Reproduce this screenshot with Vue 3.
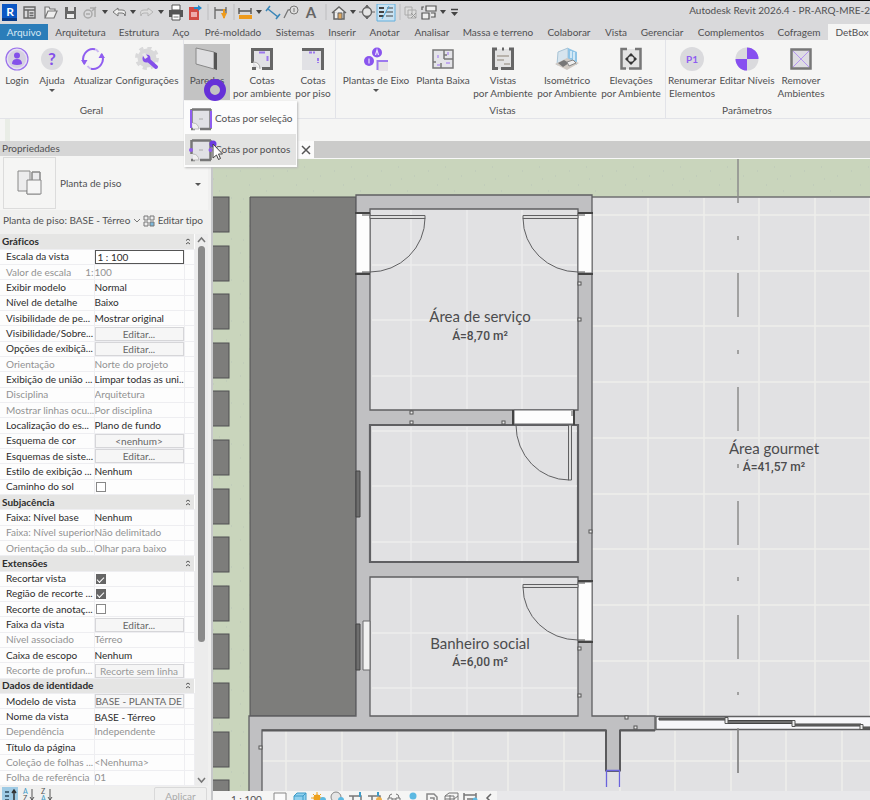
<script setup>
import { ref } from 'vue'

const caret = '<path d="M2 6h6L5 10z" fill="#444"/>'
const sep = '<path d="M4 0v16" stroke="#bdbdbf"/>'

const quickItems = [
  { name: 'Revit', w: 20, d: '<path d="M2 0h15v17H2z" fill="#0b57c4"/><path d="M2 14h15v3H2z" fill="#083a86"/><text x="10" y="12" font-size="12" font-weight="700" text-anchor="middle" fill="#fff">R</text>' },
  { name: 'Início', w: 20, d: '<g fill="none" stroke="#666" stroke-width="1.400"><path d="M4 3h11v11H4zM4 6h11M8 6v8"/><path d="M9.500 9h4M9.500 11.500h4"/></g>' },
  { name: 'Abrir', w: 20, d: '<path d="M5 14V3h4l1 2h5v2M5 14l3-7h9l-3 7z" fill="#eee" stroke="#777" stroke-width="1.200"/>' },
  { name: 'Salvar', w: 20, d: '<path d="M5 3h11v12H5z" fill="#666"/><path d="M8 3h6v4H8z" fill="#ddd"/><path d="M7 10h7v4H7z" fill="#eee"/>' },
  { name: 'Sincronizar', w: 20, d: '<g fill="none" stroke="#aaa" stroke-width="1.500"><circle cx="8" cy="10" r="4"/><path d="M10 4h5v9M12 7l4-4M6 10h4"/></g>' },
  { name: 'Opções de sincronização', w: 10, d: caret },
  { name: 'Desfazer', w: 18, d: '<path d="M8 4L3 8l5 4v-3h4q3 0 3 3 2-6-3-6H8z" fill="#eee" stroke="#777"/>' },
  { name: 'Lista de desfazer', w: 10, d: caret },
  { name: 'Refazer', w: 18, d: '<path d="M10 4l5 4-5 4v-3H6q-3 0-3 3-2-6 3-6h4z" fill="#ddd" stroke="#b5b5b5"/>' },
  { name: 'Lista de refazer', w: 10, d: caret },
  { name: 'Imprimir', w: 20, d: '<path d="M6 1h8v5H6z" fill="#fff" stroke="#555"/><path d="M3 6h14v7H3z" fill="#555"/><path d="M6 10h8v6H6z" fill="#fff" stroke="#555"/><path d="M7.500 13h5" stroke="#777"/>' },
  { name: 'Exportar PDF', w: 18, d: '<path d="M3 3h10v13H3z" fill="#d14a43"/><path d="M5 8h6v5H5z" fill="#eaa"/><path d="M8 3h4V1l4 3-4 3V5H8z" fill="#2487c9"/>' },
  { w: 8, d: sep },
  { name: 'Cota', w: 18, d: '<g fill="none" stroke="#666" stroke-width="1.300"><path d="M3 3v12M14 3v6M3 6h11"/></g><path d="M9 9h6l-3 6z" fill="#ee9b1d"/><path d="M12 5v9" stroke="#ee9b1d" stroke-width="2"/>' },
  { w: 6, d: sep },
  { name: 'Medir', w: 18, d: '<path d="M3 4v6M15 4v6M3 7h12" stroke="#555" stroke-width="1.400"/><path d="M3 11h13v4H3z" fill="#ee9b1d"/>' },
  { name: 'Opções de medida', w: 10, d: caret },
  { name: 'Cota alinhada', w: 18, d: '<path d="M4 5l10 8M2 7l4-5M12 15l4-5" stroke="#3a86b8" stroke-width="1.600"/>' },
  { name: 'Identificador', w: 18, d: '<path d="M2 14l4-8 5-1" fill="none" stroke="#777" stroke-width="1.300"/><circle cx="12" cy="6" r="4" fill="#ddd" stroke="#777"/><path d="M12 4v4" stroke="#777"/>' },
  { name: 'Texto', w: 22, d: '<text x="11" y="14" font-size="15" font-weight="700" text-anchor="middle" fill="#666">A</text>' },
  { w: 8, d: sep },
  { name: 'Vista 3D', w: 18, d: '<path d="M2 9l7-6 7 6M4 8v7h10V8" fill="#eee" stroke="#666" stroke-width="1.500"/><path d="M8 9h4v6H8z" fill="#dfa860" stroke="#666"/>' },
  { name: 'Opções de vista 3D', w: 10, d: caret },
  { name: 'Corte', w: 18, d: '<path d="M9 1l3 4H6zM9 15l3-4H6zM1 8h3M14 8h3" fill="#666" stroke="#666"/><circle cx="9" cy="8" r="4.500" fill="#e5e5e5" stroke="#666" stroke-width="1.400"/>' },
  { name: 'Linhas finas', w: 20, d: '<path d="M1 0h18v17H1z" fill="#c9e2f2" stroke="#62b0de"/><path d="M3 4h5M3 8h5M3 12h5" stroke="#444" stroke-width="2"/><path d="M11 4h6M10 8h7M10 12h7" stroke="#444"/><path d="M13 2L6 15" stroke="#4fa8db"/>' },
  { w: 6, d: sep },
  { name: 'Fechar inativas', w: 18, d: '<path d="M3 3h7v8H3zM6 6h8v8H6z" fill="#ddd" stroke="#aaa"/><path d="M9 9l5 5M14 9l-5 5" stroke="#999"/>' },
  { name: 'Alternar janelas', w: 18, d: '<g fill="#eee" stroke="#555" stroke-width="1.200"><path d="M6 2h10v5H6zM2 9h7v6H2zM11 9h4v4h-4"/><path d="M2 6V3h2"/></g>' },
  { name: 'Lista de janelas', w: 10, d: caret },
  { name: 'Personalizar', w: 14, d: '<path d="M3 5.500h7" stroke="#444" stroke-width="1.500"/><path d="M3 8h7l-3.500 4z" fill="#444"/>' },
]

const tabs = ['Arquivo', 'Arquitetura', 'Estrutura', 'Aço', 'Pré-moldado', 'Sistemas', 'Inserir', 'Anotar', 'Analisar', 'Massa e terreno', 'Colaborar', 'Vista', 'Gerenciar', 'Complementos', 'Cofragem', 'DetBox']
const activeTab = ref('DetBox')

const groups = [
  {
    title: 'Geral', cls: 'geral', tools: [
      { lines: ['Login'], d: '<circle cx="12" cy="12" r="11" fill="#e6e1f2" stroke="#9a70ec" stroke-width="1.200"/><circle cx="12" cy="12" r="9" fill="#d5d1e0"/><circle cx="12" cy="8.500" r="3" fill="#8450ea"/><path d="M7 17q0-5 5-5t5 5q-5 2-10 0z" fill="#8450ea"/>' },
      { lines: ['Ajuda'], drop: true, d: '<circle cx="12" cy="12" r="11" fill="#dcdcdf"/><text x="12" y="18" font-size="17" font-weight="700" text-anchor="middle" fill="#8450ea">?</text>' },
      { lines: ['Atualizar'], d: '<g fill="none" stroke="#8f5df0" stroke-width="2"><path d="M3.500 17A10 10 0 0 1 14 2.200M20.500 7A10 10 0 0 1 10 21.800"/><path d="M6.500 19A10 10 0 0 0 10 21.800M17.500 5A10 10 0 0 0 14 2.200" opacity=".4"/></g><path d="M0 13l3.500 5 3-5zM17.500 11l3-5 3.500 5z" fill="#8f5df0"/>' },
      { lines: ['Configurações'], d: '<circle cx="12" cy="11" r="6.500" fill="none" stroke="#d9d9da" stroke-width="6"/><circle cx="12" cy="11" r="10.500" fill="none" stroke="#d9d9da" stroke-width="3" stroke-dasharray="4.200 4.050"/><path d="M12 12l9 8" stroke="#8450ea" stroke-width="4" stroke-linecap="round"/><circle cx="11.500" cy="11.500" r="4" fill="#8450ea"/><path d="M7 7l3-1 3 4-3 2z" fill="#e9e9e9"/>' },
    ],
  },
  {
    title: '', cls: 'cotas', tools: [
      { lines: ['Paredes'], open: true, d: '<path d="M1 1l18 4v17L1 17z" fill="#dedee0" stroke="#888"/><path d="M19 5l3 1v17l-3-1z" fill="#555"/>' },
      { lines: ['Cotas', 'por ambiente'], d: '<path d="M3 3h18v18H3z" fill="#e1e1e5"/><path d="M2.500 16V2.500h19v19H12M2 21.500h4" fill="none" stroke="#666" stroke-width="3"/><path d="M3 15q7 0 7 7" fill="#f5f5f4" stroke="#aaa"/><path d="M9 5.500h6M17.500 9v5" stroke="#9d78ee" stroke-width="2"/>' },
      { lines: ['Cotas', 'por piso'], d: '<path d="M1 3h20v20H1z" fill="#e1e1e5"/><path d="M1 2.500h20.500V23" fill="none" stroke="#666" stroke-width="3"/><path d="M8 5.500h6M17 11v5" stroke="#9d78ee" stroke-width="2" stroke-dasharray="3 1"/>' },
    ],
  },
  {
    title: 'Vistas', cls: 'vistas', tools: [
      { lines: ['Plantas de Eixo'], drop: true, d: '<circle cx="5" cy="14" r="5" fill="#8a55ee"/><circle cx="13" cy="5.500" r="5" fill="#8a55ee"/><path d="M5 11.500v5M11.500 8l1.500-5 1.500 5" fill="none" stroke="#e9dffc" stroke-width="1.200"/><path d="M14 15h10v9H14z" fill="#e8e3e6"/><path d="M13.500 23v-9H24" fill="none" stroke="#9d78ee" stroke-width="2"/>' },
      { lines: ['Planta Baixa'], d: '<path d="M2 3h20v18H2z" fill="#e4e4e8" stroke="#777" stroke-width="1.500"/><path d="M13 3v9M13 8h3M13 12h9M10 21v-5M2 15h3" stroke="#777" stroke-width="1.500" fill="none"/><path d="M7 8v3M15 16h4M17 5v3M6 18h3" stroke="#b496f0" stroke-width="1.500"/>' },
      { lines: ['Vistas', 'por Ambiente'], d: '<path d="M3 2h18v20H3z" fill="#e3e3e3"/><path d="M6 2H2.500v19.500H7M11 2h2M18 2h3.500v19.500H10" fill="none" stroke="#666" stroke-width="3"/><path d="M6 9h12M6 13h7M13 17h6" stroke="#aaa49a" stroke-width="1.500"/>' },
      { lines: ['Isométrico', 'por Ambiente'], d: '<path d="M3 5l10-4v13L2 18z" fill="#d7e5ee" stroke="#a9c4d6"/><path d="M13 1l9 4v13l-9-4z" fill="#8fc4e6"/><path d="M16 4v7M19 5v8" stroke="#e8f4fb" stroke-width="1.500"/><path d="M0 17l12-6 12 5-12 7z" fill="#cfc9c2"/><path d="M3 16l6-3 5 3-6 4z" fill="#777"/><path d="M12 15l6-2 3 3-7 3z" fill="#efefef" stroke="#888"/>' },
      { lines: ['Elevações', 'por Ambiente'], d: '<path d="M3 2h18v20H3z" fill="#e3e3e3"/><path d="M8 2H2.500v19.500H7M16 2h5.500v19.500H10" fill="none" stroke="#777" stroke-width="2.500"/><circle cx="12" cy="12" r="3.500" fill="none" stroke="#333" stroke-width="1.500"/><path d="M12 6l2 2h-4zM12 18l2-2h-4zM6 12l2-2v4zM18 12l-2-2v4z" fill="#333"/>' },
    ],
  },
  {
    title: 'Parâmetros', cls: 'parametros', tools: [
      { lines: ['Renumerar', 'Elementos'], d: '<circle cx="12" cy="12" r="12" fill="#dadadd"/><text x="12" y="15.500" font-size="10" font-weight="700" text-anchor="middle" fill="#8f5df0">P1</text>' },
      { lines: ['Editar Níveis'], d: '<circle cx="12" cy="12" r="11.500" fill="#dadadd"/><path d="M12 12V.5A11.500 11.500 0 0 1 23.500 12zM12 12v11.500A11.500 11.500 0 0 1 .5 12z" fill="#874ff0"/>' },
      { lines: ['Remover', 'Ambientes'], d: '<path d="M2.500 2.500h19v19h-19z" fill="#dedde3" stroke="#777" stroke-width="2.500"/><path d="M4 4l16 16M20 4L4 20" stroke="#b595f2"/>' },
    ],
  },
]

const room = '<path d="M2 2h20v20H2z" fill="#e1e1e5"/><path d="M3 2.500h19M2.500 2v14M21.500 2v20M2 22h4M11 22h11" stroke="#777" stroke-width="2.500"/><path d="M4 16q5 0 6 6H4" fill="#f0f0f0" stroke="#bbb"/><path d="M10 12h4" stroke="#aaa"/>'
const menuItems = [
  { label: 'Cotas por seleção', d: room + '<path d="M2 3v18M22 4v17" stroke="#8f5df0" stroke-width="2"/>' },
  { label: 'Cotas por pontos', hot: true, d: room + '<circle cx="2" cy="12" r="2" fill="#8f5df0"/><circle cx="21.500" cy="12" r="2" fill="#8f5df0"/>' },
]

const sections = [
  {
    title: 'Gráficos', rows: [
      { k: 'Escala da vista', t: 'select', v: '1 : 100' },
      { k: 'Valor de escala', extra: '1:', v: '100', off: true },
      { k: 'Exibir modelo', v: 'Normal' },
      { k: 'Nível de detalhe', v: 'Baixo' },
      { k: 'Visibilidade de pe...', v: 'Mostrar original' },
      { k: 'Visibilidade/Sobre...', t: 'button', v: 'Editar...' },
      { k: 'Opções de exibiçã...', t: 'button', v: 'Editar...' },
      { k: 'Orientação', v: 'Norte do projeto', off: true },
      { k: 'Exibição de união ...', v: 'Limpar todas as uni...' },
      { k: 'Disciplina', v: 'Arquitetura', off: true },
      { k: 'Mostrar linhas ocu...', v: 'Por disciplina', off: true },
      { k: 'Localização do es...', v: 'Plano de fundo' },
      { k: 'Esquema de cor', t: 'button', v: '<nenhum>' },
      { k: 'Esquemas de siste...', t: 'button', v: 'Editar...' },
      { k: 'Estilo de exibição ...', v: 'Nenhum' },
      { k: 'Caminho do sol', t: 'check', v: false },
    ],
  },
  {
    title: 'Subjacência', rows: [
      { k: 'Faixa: Nível base', v: 'Nenhum' },
      { k: 'Faixa: Nível superior', v: 'Não delimitado', off: true },
      { k: 'Orientação da sub...', v: 'Olhar para baixo', off: true },
    ],
  },
  {
    title: 'Extensões', rows: [
      { k: 'Recortar vista', t: 'check', v: true },
      { k: 'Região de recorte ...', t: 'check', v: true },
      { k: 'Recorte de anotaç...', t: 'check', v: false },
      { k: 'Faixa da vista', t: 'button', v: 'Editar...' },
      { k: 'Nível associado', v: 'Térreo', off: true },
      { k: 'Caixa de escopo', v: 'Nenhum' },
      { k: 'Recorte de profun...', t: 'button', v: 'Recorte sem linha', off: true },
    ],
  },
  {
    title: 'Dados de identidade', rows: [
      { k: 'Modelo de vista', t: 'button', v: 'BASE - PLANTA DE PI', start: true },
      { k: 'Nome da vista', t: 'text', v: 'BASE - Térreo' },
      { k: 'Dependência', v: 'Independente', off: true },
      { k: 'Título da página', t: 'text', v: '' },
      { k: 'Coleção de folhas ...', v: '<Nenhuma>', off: true },
      { k: 'Folha de referência', v: '01', off: true },
    ],
  },
]
const idFor = (s, r) => `prop-${s}-${r}`

const series = (start, step, count) => Array.from({ length: count }, (_, i) => Math.round(start + i * step))
const slabs = series(197, 48.6, 13)
const roomCols = series(411, 55.7, 3)
const roomRows = [265, 320, 376, 431, 486, 542, 633, 688]
const gourmetCols = series(648, 55.6, 5)
const gourmetRows = series(215, 55.7, 9)
const lowerCols = series(286, 55.6, 11)
const axisDashes = [[159, 203], [236, 240], [273, 317], [350, 354], [387, 431], [464, 468], [501, 545], [577, 581], [615, 659], [692, 695], [728, 773]]
const sockets = [[578, 282], [578, 318], [410, 411], [410, 421], [502, 421], [589, 530], [578, 647], [578, 694], [625, 716], [634, 726], [259, 746]]

const viewTools = [
  { name: 'Estilo visual', d: '<path d="M2 2h12v12H2z" fill="#fbfbfb" stroke="#888"/>' },
  { name: 'Modelo', d: '<path d="M3 5l3-3h9v10l-3 3H3z" fill="#8fd0ee" stroke="#3c9bc8"/><path d="M3 5h9v9M12 5l3-3" fill="none" stroke="#3c9bc8"/>' },
  { name: 'Caminho do sol', d: '<circle cx="7" cy="7" r="3.500" fill="#eda01c"/><path d="M7 1v12M1 7h12M3 3l8 8M11 3l-8 8" stroke="#eda01c"/><circle cx="13" cy="9" r="3" fill="#5cb9e2"/>' },
  { name: 'Sombras', d: '<circle cx="7" cy="6" r="5" fill="#e5e5e5" stroke="#888"/><circle cx="12" cy="9" r="3" fill="#5cb9e2"/>' },
  { name: 'Recortar vista', d: '<path d="M1 5h12v8M5 5v8" fill="none" stroke="#777" stroke-width="1.500"/><path d="M12 1v5" stroke="#3c9bc8" stroke-width="2"/>' },
  { name: 'Região de recorte', d: '<path d="M1 5h12v8M5 5v8" fill="none" stroke="#777" stroke-width="1.500"/><path d="M11 1v4" stroke="#3c9bc8" stroke-width="2"/><circle cx="12" cy="9" r="3" fill="#edb04c"/>' },
  { name: 'Ocultar', d: '<path d="M3 7q0-4 3-4M13 7q0-4-3-4M2 7h4v4H2zM10 7h4v4h-4zM6 8h4" fill="none" stroke="#777"/>' },
  { name: 'Revelar', d: '<circle cx="8" cy="5" r="3.500" fill="#5cb9e2"/><path d="M6 10h4" stroke="#777" stroke-width="2"/>' },
  { name: 'Propriedades temporárias', d: '<path d="M3 3h7l3 3v8H3zM6 7h4v5" fill="none" stroke="#888" stroke-width="1.500"/>' },
  { name: 'Modelo analítico', d: '<path d="M2 5l4-3h9v9l-4 3H2zM2 8h9l4-3M7 4v10M2 5h9v9" fill="none" stroke="#777"/>' },
  { name: 'Restrições', d: '<path d="M2 2v12M14 2v6M2 4h12M5 8h6v5" fill="none" stroke="#777" stroke-width="1.500"/><circle cx="13" cy="9" r="2.500" fill="#5cb9e2"/>' },
  { name: 'Recolher', d: '<path d="M10 3L6 7l4 4" fill="none" stroke="#666" stroke-width="1.500"/>' },
]
</script>

<template>
  <div class="app">
    <header class="titlebar">
      <nav class="quick" aria-label="Acesso rápido">
        <template v-for="(q, i) in quickItems" :key="i">
          <button v-if="q.name" type="button" class="bare" :aria-label="q.name">
            <svg :width="q.w" height="18" v-html="q.d" />
          </button>
          <svg v-else :width="q.w" height="18" v-html="q.d" />
        </template>
      </nav>
      <span class="doc-title">Autodesk Revit 2026.4 - PR-ARQ-MRE-2</span>
    </header>

    <nav class="tabs">
      <button v-for="t in tabs" :key="t" type="button" class="tab"
        :class="{ file: t === 'Arquivo', active: t === activeTab }" @click="activeTab = t">{{ t }}</button>
    </nav>

    <section class="ribbon">
      <div v-for="g in groups" :key="g.cls" class="group" :class="g.cls">
        <div class="tools">
          <div v-for="tool in g.tools" :key="tool.lines.join()" class="tool-slot">
            <button type="button" class="tool" :class="{ pressed: tool.open }">
              <svg width="24" height="24" viewBox="0 0 24 24" v-html="tool.d" />
              <span v-for="l in tool.lines" :key="l" class="line">{{ l }}</span>
              <span v-if="tool.drop" class="drop" />
            </button>
            <template v-if="tool.open">
              <div class="menu">
                <button v-for="m in menuItems" :key="m.label" type="button" class="menu-item" :class="{ hot: m.hot }">
                  <svg width="24" height="24" viewBox="0 0 24 24" v-html="m.d" />
                  <span>{{ m.label }}</span>
                </button>
              </div>
              <span class="click-ring" />
              <svg class="pointer" width="16" height="24" viewBox="0 0 16 24">
                <circle cx="4" cy="4" r="3.500" fill="#6b3be0" />
                <path d="M4 4v14l3.500-3 2 4.500 2-1-2-4.500h4z" fill="#fff" stroke="#444" />
              </svg>
            </template>
          </div>
        </div>
        <div class="group-title">{{ g.title }}</div>
      </div>
    </section>
    <div class="options" />

    <main class="work">
      <aside class="panel">
        <h2 class="panel-title">Propriedades</h2>
        <div class="type">
          <span class="thumb">
            <svg width="26" height="26" viewBox="0 0 26 26">
              <g fill="#ececed" stroke="#888"><path d="M1 1h12v20H1zM15 2h8v22H10v-4h5z" /><path d="M10 10h14v14H10z" fill="#f5f5f5" /><path d="M15 10V2h8v8" fill="none" /></g>
            </svg>
          </span>
          <span class="type-name">Planta de piso</span>
          <span class="drop" />
        </div>
        <div class="instance">
          <button type="button" class="bare picker">Planta de piso: BASE - Térreo
            <svg width="8" height="8"><path d="M1 2l3 3 3-3" fill="none" stroke="#777" /></svg>
          </button>
          <button type="button" class="bare edit-type">
            <svg width="12" height="12"><path d="M1 1h4v4H1zM1 7h4v4H1zM7 1h4v4H7z" fill="#eee" stroke="#777" /><path d="M7 7h4v4H7z" fill="#7db9dc" stroke="#777" /></svg>
            Editar tipo
          </button>
        </div>
        <div class="grid-area">
          <table class="props">
            <colgroup><col class="c-name"><col class="c-val"><col class="c-end"></colgroup>
            <tbody v-for="(s, si) in sections" :key="s.title">
              <tr class="section">
                <th colspan="2" scope="rowgroup">{{ s.title }}</th>
                <td><svg width="7" height="9"><path d="M2 3.500l2-1.500 2 1.500M2 7l2-1.500L6 7" fill="none" stroke="#555" /></svg></td>
              </tr>
              <tr v-for="(r, ri) in s.rows" :key="r.k" :class="{ off: r.off }">
                <th scope="row">
                  <label v-if="r.t" :for="idFor(si, ri)">{{ r.k }}</label>
                  <span v-else class="key"><span>{{ r.k }}</span><span v-if="r.extra">{{ r.extra }}</span></span>
                </th>
                <td class="val">
                  <select v-if="r.t === 'select'" :id="idFor(si, ri)" class="scale"><option>{{ r.v }}</option></select>
                  <button v-else-if="r.t === 'button'" :id="idFor(si, ri)" type="button" class="cell-btn" :class="{ start: r.start }">{{ r.v }}</button>
                  <input v-else-if="r.t === 'check'" :id="idFor(si, ri)" type="checkbox" :checked="r.v">
                  <input v-else-if="r.t === 'text'" :id="idFor(si, ri)" type="text" class="cell-text" :value="r.v">
                  <template v-else>{{ r.v }}</template>
                </td>
                <td />
              </tr>
            </tbody>
          </table>
          <div class="scroll">
            <svg width="9" height="12"><path d="M1 8l3.500-4L8 8" fill="none" stroke="#777" stroke-width="1.500" /></svg>
            <div class="track"><div class="thumb-bar" /></div>
            <svg width="9" height="12"><path d="M1 4l3.500 4L8 4" fill="none" stroke="#777" stroke-width="1.500" /></svg>
          </div>
        </div>
        <footer class="panel-foot">
          <button type="button" class="bare sort on" aria-label="Agrupar">
            <svg width="16" height="16"><path d="M3 5h4M3 9h4M3 13h4" stroke="#47677d" stroke-width="2" /><path d="M12 3v12M10 6l2-3 2 3" stroke="#333" stroke-width="1.500" fill="none" /></svg>
          </button>
          <button type="button" class="bare sort" aria-label="Ordem crescente">
            <svg width="16" height="16"><text x="3" y="7" font-size="7" fill="#3c9bc8">A</text><text x="3" y="14" font-size="7" fill="#555">Z</text><path d="M12 2v11M10 10l2 3 2-3" stroke="#555" fill="none" /></svg>
          </button>
          <button type="button" class="bare sort" aria-label="Ordem decrescente">
            <svg width="16" height="16"><text x="3" y="7" font-size="7" fill="#555">Z</text><text x="3" y="14" font-size="7" fill="#3c9bc8">A</text><path d="M12 2v11M10 10l2 3 2-3" stroke="#555" fill="none" /></svg>
          </button>
          <button type="button" class="apply" disabled>Aplicar</button>
        </footer>
      </aside>

      <section class="view">
        <div class="view-tabs">
          <div class="view-tab">
            <button type="button" class="bare close" aria-label="Fechar vista">
              <svg width="10" height="10"><path d="M1 1l8 8M9 1L1 9" stroke="#555" stroke-width="1.500" /></svg>
            </button>
          </div>
        </div>
        <svg class="plan" viewBox="213 159 657 632" preserveAspectRatio="xMinYMin slice" role="img" aria-label="Planta baixa do térreo">
          <defs>
            <pattern id="grass" width="47" height="41" patternUnits="userSpaceOnUse">
              <path d="M0 0h47v41H0z" fill="#c9d5bc" />
              <path d="M5 7h1M22 3h1M38 12h1M14 21h1M31 27h1M8 35h1M43 34h1M25 15h1" stroke="#bac5b8" />
            </pattern>
          </defs>
          <path d="M213 159h657v632H213z" fill="url(#grass)" />
          <g fill="#7d7d7b" stroke="#505052">
            <rect v-for="y in slabs" :key="y" x="205" :y="y" width="24" height="35" />
            <path d="M250 197h106v519H250z" />
          </g>
          <path d="M592 197h290v520H592z" fill="#e1e1e3" />
          <path d="M262 730h620v70H262z" fill="#e1e1e3" />
          <g stroke="#eeeeeb" stroke-width="1.500">
            <path v-for="x in gourmetCols" :key="'gc' + x" :d="`M${x} 198V716`" />
            <path v-for="y in gourmetRows" :key="'gr' + y" :d="`M592 ${y}H880`" />
            <path v-for="x in lowerCols" :key="'lc' + x" :d="`M${x} 731V800`" />
            <path d="M262 761H880" />
          </g>
          <path d="M592 197H880" stroke="#6f6f72" stroke-width="1.500" />
          <g fill="none" stroke="#8b8b8b" stroke-width="1.500">
            <path v-for="d in axisDashes" :key="d[0]" :d="`M738 ${d[0]}V${d[1]}`" />
          </g>
          <path d="M356 195h236v521h63v14h-35v41h-14v-41H262v70h-13v-84h107z" fill="#c0c0c2" stroke="#5f5f62" stroke-width="1.300" />
          <g fill="#e1e1e3" stroke="#5f5f62" stroke-width="1.300">
            <path d="M370 209h208v201H370zM370 577h208v139H370z" />
            <path d="M370 425h208v137H370z" stroke-width="2.200" />
          </g>
          <path d="M262 730.500H606M620 730.500H655M606 730v41M620 730v41M606 771h14" stroke="#5a5a5c" stroke-width="2" />
          <g stroke="#ededed" stroke-width="1.400">
            <path v-for="x in roomCols" :key="x" :d="`M${x} 210V409M${x} 427V561M${x} 578V715`" />
            <path v-for="y in roomRows" :key="y" :d="`M372 ${y}H577`" />
          </g>
          <g fill="#fdfdfd" stroke="#6a6a6c">
            <path d="M356 213h14v60h-14zM578 213h14v60h-14zM514 410h60v14h-60zM578 582h14v59h-14z" />
            <path d="M363 621h7v49h-7z" fill="#f1f1f1" />
          </g>
          <path d="M355 213h15M355 274h15M578 213h15M578 274h15M578 581h15M578 642h15M513 410v15M574 410v15" stroke="#444" stroke-width="2" />
          <path d="M362 215h8M362 272h8M578 215h7M578 272h7M578 583h7M578 640h7M572 411v5" stroke="#555" />
          <g fill="#dedede" stroke="#606062">
            <path d="M370 215.500h55v3h-55zM523 215.500h55v3h-55zM568.500 425h3v55h-3zM523 584.500h55v3h-55z" />
            <path d="M425 218A55 54 0 0 1 370 272M523 218A55 54 0 0 0 578 272M516 425A53 55 0 0 0 569 480M523 587A55 53 0 0 0 578 640" fill="none" />
          </g>
          <g fill="#6e6e6e" stroke="#454545">
            <path d="M356 471h4v46h-4zM356 624h4v46h-4z" />
          </g>
          <g fill="#eee" stroke="#555">
            <rect v-for="s in sockets" :key="s.join()" :x="s[0]" :y="s[1]" width="3" height="3" />
          </g>
          <path d="M656 716.500h230v13H656z" fill="#f7f7fa" stroke="#606062" stroke-width="1.300" />
          <g fill="#6f6f6f" stroke="#454545">
            <path d="M659 718h68v2h-68zM727 720.500h67v3h-67zM794 724h67v2h-67zM861 727h20v2h-20z" />
          </g>
          <path d="M725 717.500h3v6h-3zM792 720.500h3v6h-3zM860 724.500h3v5h-3z" fill="#eee" stroke="#555" />
          <path d="M738 728v45" stroke="#8b8b8b" stroke-width="1.500" />
          <path d="M606.500 770v17M619.500 770v17M606 770.500h14" stroke="#6a64dc" stroke-width="1.300" />
          <g class="room-name">
            <text x="480" y="322">Área de serviço</text>
            <text x="480" y="649">Banheiro social</text>
            <text x="774" y="454">Área gourmet</text>
          </g>
          <g class="room-area">
            <text x="480" y="340">Á=8,70 m²</text>
            <text x="480" y="666">Á=6,00 m²</text>
            <text x="774" y="471">Á=41,57 m²</text>
          </g>
        </svg>
        <footer class="status">
          <div class="view-control">
            <button type="button" class="bare scale-label">1 : 100</button>
            <button v-for="v in viewTools" :key="v.name" type="button" class="bare" :aria-label="v.name">
              <svg width="16" height="16" v-html="v.d" />
            </button>
          </div>
        </footer>
      </section>
    </main>
  </div>
</template>

<style>
body {
  background: #f5f5f4;
}
</style>

<style scoped>
* {
  box-sizing: border-box;
}
.app {
  display: flex;
  flex-direction: column;
  height: 100vh;
  overflow: hidden;
  border-top: 1px solid #000;
  background: #f5f5f4;
  color: #505052;
  font: 10px/13px Lato, "Open Sans", sans-serif;
  font-variant-ligatures: none;
  white-space: nowrap;
}
button,
select,
input {
  font: inherit;
  font-variant-ligatures: none;
  color: inherit;
  margin: 0;
}
svg {
  display: block;
  flex: none;
}
.bare {
  display: flex;
  align-items: center;
  padding: 0;
  border: 0;
  background: none;
}
.titlebar {
  flex: none;
  display: flex;
  justify-content: space-between;
  height: 23px;
  background: #d9d9db;
}
.quick {
  display: flex;
  align-items: center;
}
.doc-title {
  flex: none;
  padding-top: 3px;
}
.tabs {
  flex: none;
  display: grid;
  grid-template-columns: 48px 65px 52px 32px 72px 52px 42px 43px 52px 80px 62px 32px 60px 78px 58px 48px;
  height: 16px;
  background: #d9d9db;
  overflow: hidden;
}
.tab {
  display: flex;
  align-items: center;
  justify-content: center;
  padding: 0;
  border: 0;
  background: none;
}
.tab.file {
  background: #2b7db9;
  color: #d7e8f4;
}
.tab.active {
  background: #f5f5f4;
}
.ribbon {
  flex: none;
  display: flex;
  height: 79px;
  border-bottom: 1px solid #e2e3e8;
}
.group {
  display: flex;
  flex-direction: column;
  justify-content: space-between;
  padding: 4px 0 0;
  border-right: 1px solid #e2e3e8;
}
.tools {
  display: grid;
}
.geral {
  width: 184px;
}
.geral .tools {
  grid-template-columns: 34px 36px 46px 62px;
}
.cotas {
  width: 152px;
}
.cotas .tools {
  grid-template-columns: 46px 64px 38px;
}
.vistas {
  width: 330px;
  padding-left: 4px;
}
.vistas .tools {
  grid-template-columns: 72px 62px 58px 70px 58px;
}
.parametros {
  width: 162px;
  border-right: 0;
}
.parametros .tools {
  grid-template-columns: 52px 58px 50px;
}
.tool-slot {
  position: relative;
}
.tool {
  display: flex;
  flex-direction: column;
  align-items: center;
  width: 100%;
  height: 56px;
  padding: 3px 0 0;
  border: 0;
  background: none;
}
.tool svg {
  margin-bottom: 3px;
}
.tool.pressed {
  background: #c3c3c3;
}
.line {
  display: flex;
  justify-content: center;
  width: 0;
}
.drop {
  width: 0;
  height: 0;
  margin-top: 2px;
  border: 3px solid transparent;
  border-top-color: #555;
  border-bottom: 0;
}
.group-title {
  height: 14px;
  text-align: center;
}
.menu {
  position: absolute;
  z-index: 2;
  top: 57px;
  left: 0;
  width: 113px;
  padding: 2px 1px;
  background: #fcfcfc;
  box-shadow: 1px 1px 2px #bbb;
}
.menu-item {
  display: flex;
  align-items: center;
  gap: 2px;
  width: 100%;
  height: 31px;
  padding: 0 4px;
  border: 0;
  background: none;
}
.menu-item.hot {
  background: #e3e3e2;
}
.click-ring {
  position: absolute;
  z-index: 3;
  top: 35px;
  left: 20px;
  width: 22px;
  height: 22px;
  border: 6px solid #6530d8;
  border-radius: 50%;
}
.pointer {
  position: absolute;
  z-index: 3;
  top: 96px;
  left: 25px;
}
.options {
  flex: none;
  height: 22px;
  border-left: 5px solid #f5f5f4;
  box-shadow: inset 5px 0 #e9ede6;
}
.work {
  flex: 1;
  display: flex;
  min-height: 0;
}
.panel {
  flex: none;
  display: flex;
  flex-direction: column;
  width: 213px;
  padding-right: 3px;
  border-right: 2px solid #c7c8ca;
  background: #f0f0ef;
}
.panel-title {
  flex: none;
  height: 15px;
  margin: 0;
  padding: 1px 2px;
  background: #d6d6d6;
  font: inherit;
}
.type {
  display: flex;
  align-items: center;
  height: 54px;
  padding-right: 7px;
  background: #f5f5f4;
}
.thumb {
  display: grid;
  place-items: center;
  width: 53px;
  height: 52px;
  margin-left: 3px;
  border: 1px solid #dcdcdc;
}
.type-name {
  flex: 1;
  padding-left: 4px;
}
.instance {
  display: flex;
  justify-content: space-between;
  height: 24px;
  padding: 0 5px 3px 3px;
}
.picker,
.edit-type {
  gap: 3px;
}
.grid-area {
  flex: 1;
  display: flex;
  min-height: 0;
}
.props {
  width: 194px;
  height: 100%;
  table-layout: fixed;
  border-collapse: collapse;
  background: #fdfdfd;
  color: #2c2c2c;
}
.c-name {
  width: 94px;
}
.c-val {
  width: 90px;
}
.c-end {
  width: 10px;
}
.props th,
.props td {
  height: 15px;
  padding: 0;
  overflow: hidden;
  border: 1px solid #eeeef1;
  font-weight: 400;
  line-height: 13px;
  text-align: left;
}
.props th {
  padding-left: 6px;
  border-left: 0;
}
.props .section th,
.props .section td {
  border: 0;
  background: #e5e5e4;
}
.props .section th {
  padding-left: 2px;
  font-weight: 700;
}
.key {
  display: flex;
  justify-content: space-between;
}
.props .off {
  color: #929292;
}
.scale,
.cell-btn,
.cell-text {
  display: block;
  width: 100%;
  height: 14px;
  padding: 0;
  border: 1px solid #d6d6d9;
  border-radius: 0;
  background: #f6f6f6;
  line-height: 12px;
  overflow: hidden;
}
.scale {
  appearance: none;
  padding-left: 2px;
  border-color: #555;
  background: #fff;
}
.cell-btn {
  color: #666;
}
.off .cell-btn {
  color: #999;
}
.cell-btn.start {
  text-align: left;
}
.cell-text {
  border: 0;
  background: none;
}
input[type="checkbox"] {
  appearance: none;
  display: grid;
  place-items: center;
  width: 10px;
  height: 10px;
  margin-left: 1px;
  border: 1px solid #888;
  background: #fff;
}
input[type="checkbox"]:checked {
  border-color: #666;
  background: #666;
}
input[type="checkbox"]:checked::after {
  content: "";
  width: 6px;
  height: 3px;
  border: solid #fff;
  border-width: 0 0 1px 1px;
  rotate: -45deg;
}
.scroll {
  flex: 1;
  display: flex;
  flex-direction: column;
  align-items: center;
  background: #ececec;
}
.track {
  flex: 1;
  width: 7px;
}
.thumb-bar {
  height: 75%;
  border-radius: 4px;
  background: #8a8a8a;
}
.panel-foot {
  flex: none;
  display: flex;
  gap: 2px;
  height: 14px;
  padding: 1px 1px 0 2px;
  overflow: hidden;
}
.sort {
  width: 16px;
  height: 16px;
}
.sort.on {
  background: #9fcbe5;
}
.apply {
  width: 53px;
  height: 18px;
  margin-left: auto;
  border: 1px solid #d9d9d9;
  border-radius: 2px;
  background: none;
  color: #aaa;
}
.view {
  flex: 1;
  display: flex;
  flex-direction: column;
  min-width: 0;
}
.view-tabs {
  flex: none;
  height: 18px;
  border-bottom: 1px solid #f8f8f8;
  background: #cbcbca;
}
.view-tab {
  display: flex;
  justify-content: flex-end;
  width: 101px;
  height: 17px;
  padding-right: 3px;
  background: #fbfbfb;
}
.plan {
  flex: 1;
  width: 100%;
  min-height: 0;
}
.room-name,
.room-area {
  fill: #4c4c4e;
  text-anchor: middle;
}
.room-name {
  font-size: 15px;
}
.room-area {
  font-size: 12px;
  font-weight: 500;
  font-family: Roboto, sans-serif;
}
.status {
  flex: none;
  height: 9px;
  overflow: hidden;
  background: #e8e8ea;
}
.view-control {
  display: flex;
  gap: 3px;
  width: 284px;
  padding-left: 18px;
  background: #f5f5f4;
}
.scale-label {
  width: 39px;
}
</style>
